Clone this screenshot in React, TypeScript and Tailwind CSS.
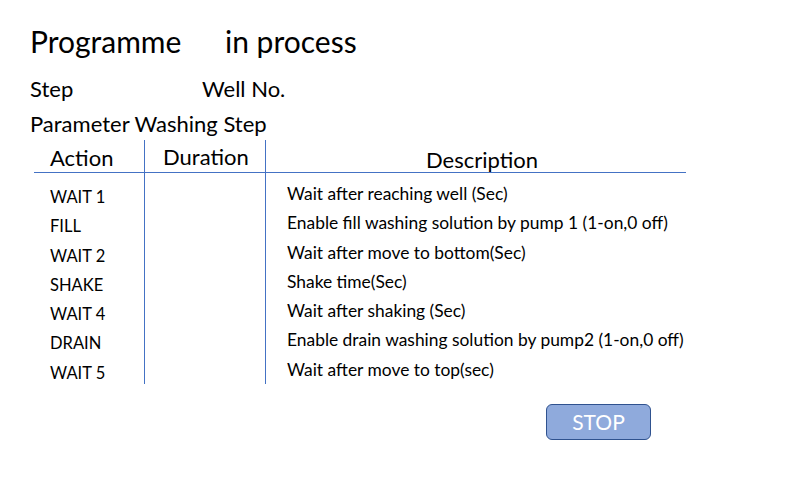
const rows = [
  { action: "WAIT 1", desc: "Wait after reaching well (Sec)" },
  { action: "FILL", desc: "Enable fill washing solution by pump 1 (1-on,0 off)" },
  { action: "WAIT 2", desc: "Wait after move to bottom(Sec)" },
  { action: "SHAKE", desc: "Shake time(Sec)" },
  { action: "WAIT 4", desc: "Wait after shaking (Sec)" },
  { action: "DRAIN", desc: "Enable drain washing solution by pump2 (1-on,0 off)" },
  { action: "WAIT 5", desc: "Wait after move to top(sec)" },
];

const App = () => {
  return (
    <div className="w-[800px] h-[480px] bg-white text-black font-['Lato',sans-serif] overflow-hidden">
      <div className="pl-[30px] pt-[23px]">
        <div className="flex text-[30px] leading-[36px]">
          <span className="w-[195px]">Programme</span>
          <span>in process</span>
        </div>
        <div className="flex mt-[17px] text-[22px] leading-[26px]">
          <span className="w-[172px]">Step</span>
          <span>Well No.</span>
        </div>
        <div className="mt-[9px] text-[22px] leading-[26px]">Parameter Washing Step</div>
      </div>

      <div className="ml-[34px] mt-[3px] flex h-[244px] w-[652px]">
        <div className="w-[110px]">
          <div className="h-[33px] border-b border-[#4472c4] pl-[16px] text-[22px] leading-[36px]">Action</div>
          <div className="pl-[16px] pt-[10px] text-[16.5px]">
            {rows.map((r) => (
              <div key={r.action} className="h-[29.3px] leading-[29.3px]">{r.action}</div>
            ))}
          </div>
        </div>
        <div className="w-[121px] border-l border-[#4472c4]">
          <div className="h-[33px] border-b border-[#4472c4] pl-[18px] text-[22px] leading-[34px]">Duration</div>
        </div>
        <div className="flex-1 border-l border-[#4472c4]">
          <div className="h-[33px] border-b border-[#4472c4] pl-[12px] text-center text-[22px] leading-[39px]">Description</div>
          <div className="pl-[21px] pt-[6px] text-[17.4px]">
            {rows.map((r) => (
              <div key={r.action} className="h-[29.3px] leading-[29.3px] whitespace-nowrap">{r.desc}</div>
            ))}
          </div>
        </div>
      </div>

      <div className="flex justify-end pr-[149px] mt-[20px]">
        <button className="w-[105px] h-[36px] rounded-[6px] bg-[#8faadc] border border-[#2f528f] text-white text-[21px] leading-[34px]">
          STOP
        </button>
      </div>
    </div>
  );
};

export default App;
